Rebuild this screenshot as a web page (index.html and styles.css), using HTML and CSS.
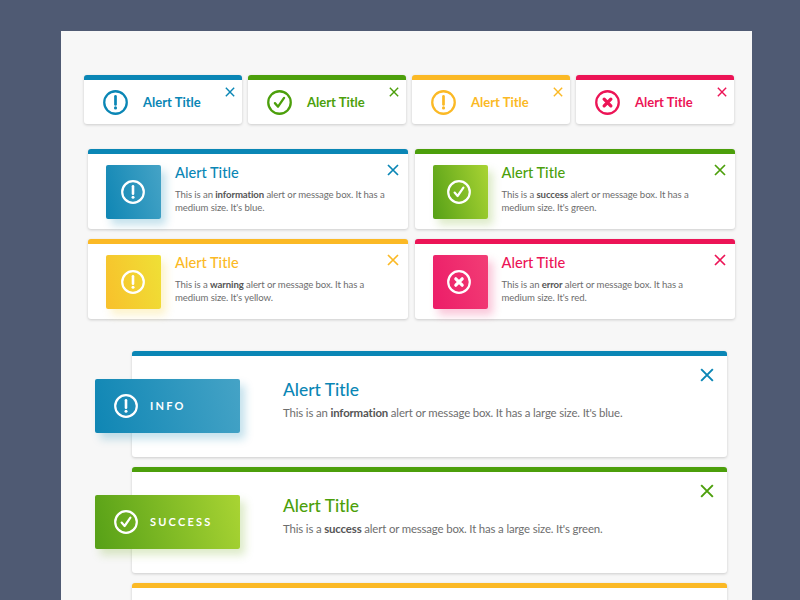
FILE: index.html
```html
<!DOCTYPE html>
<html lang="en">
<head>
    <meta charset="UTF-8">
    <meta name="viewport" content="width=device-width, initial-scale=1.0">
    <title>Alert Boxes</title>
    <link rel="stylesheet" href="styles.css">
</head>
<body>
    <svg class="defs" width="0" height="0">
        <symbol id="i-alert" viewBox="0 0 24 24">
            <circle cx="12" cy="12" r="10.8" fill="none" stroke="currentColor" stroke-width="2.2"/>
            <path d="M12 6.2v7.6" fill="none" stroke="currentColor" stroke-width="2.6" stroke-linecap="round"/>
            <circle cx="12" cy="17.2" r="1.5" fill="currentColor"/>
        </symbol>
        <symbol id="i-check" viewBox="0 0 24 24">
            <circle cx="12" cy="12" r="10.8" fill="none" stroke="currentColor" stroke-width="2.2"/>
            <path d="M7.6 12.6l3 3.4 5.8-8.4" fill="none" stroke="currentColor" stroke-width="2.2" stroke-linecap="round" stroke-linejoin="round"/>
        </symbol>
        <symbol id="i-error" viewBox="0 0 24 24">
            <circle cx="12" cy="12" r="10.8" fill="none" stroke="currentColor" stroke-width="2.2"/>
            <path d="M8.8 8.8l6.4 6.4M15.2 8.8l-6.4 6.4" fill="none" stroke="currentColor" stroke-width="3.2" stroke-linecap="round"/>
        </symbol>
        <symbol id="i-close" viewBox="0 0 12 12">
            <path d="M1 1l10 10M11 1L1 11" fill="none" stroke="currentColor" stroke-width="1.7"/>
        </symbol>
    </svg>

    <main class="sheet">
        <section class="row-sm">
            <div class="alert alert-sm info">
                <svg class="icon"><use href="#i-alert"/></svg>
                <h3>Alert Title</h3>
                <svg class="close"><use href="#i-close"/></svg>
            </div>
            <div class="alert alert-sm success">
                <svg class="icon"><use href="#i-check"/></svg>
                <h3>Alert Title</h3>
                <svg class="close"><use href="#i-close"/></svg>
            </div>
            <div class="alert alert-sm warning">
                <svg class="icon"><use href="#i-alert"/></svg>
                <h3>Alert Title</h3>
                <svg class="close"><use href="#i-close"/></svg>
            </div>
            <div class="alert alert-sm error">
                <svg class="icon"><use href="#i-error"/></svg>
                <h3>Alert Title</h3>
                <svg class="close"><use href="#i-close"/></svg>
            </div>
        </section>

        <section class="grid-md">
            <div class="alert alert-md info">
                <div class="tile"><svg class="icon"><use href="#i-alert"/></svg></div>
                <div class="copy">
                    <h3>Alert Title</h3>
                    <p>This is an <b>information</b> alert or message box. It has a<br>medium size. It's blue.</p>
                </div>
                <svg class="close"><use href="#i-close"/></svg>
            </div>
            <div class="alert alert-md success">
                <div class="tile"><svg class="icon"><use href="#i-check"/></svg></div>
                <div class="copy">
                    <h3>Alert Title</h3>
                    <p>This is a <b>success</b> alert or message box. It has a<br>medium size. It's green.</p>
                </div>
                <svg class="close"><use href="#i-close"/></svg>
            </div>
            <div class="alert alert-md warning">
                <div class="tile"><svg class="icon"><use href="#i-alert"/></svg></div>
                <div class="copy">
                    <h3>Alert Title</h3>
                    <p>This is a <b>warning</b> alert or message box. It has a<br>medium size. It's yellow.</p>
                </div>
                <svg class="close"><use href="#i-close"/></svg>
            </div>
            <div class="alert alert-md error">
                <div class="tile"><svg class="icon"><use href="#i-error"/></svg></div>
                <div class="copy">
                    <h3>Alert Title</h3>
                    <p>This is an <b>error</b> alert or message box. It has a<br>medium size. It's red.</p>
                </div>
                <svg class="close"><use href="#i-close"/></svg>
            </div>
        </section>

        <section class="stack-lg">
            <div class="alert alert-lg info">
                <div class="tile"><svg class="icon"><use href="#i-alert"/></svg><span>INFO</span></div>
                <div class="copy">
                    <h3>Alert Title</h3>
                    <p>This is an <b>information</b> alert or message box. It has a large size. It's blue.</p>
                </div>
                <svg class="close"><use href="#i-close"/></svg>
            </div>
            <div class="alert alert-lg success">
                <div class="tile"><svg class="icon"><use href="#i-check"/></svg><span>SUCCESS</span></div>
                <div class="copy">
                    <h3>Alert Title</h3>
                    <p>This is a <b>success</b> alert or message box. It has a large size. It's green.</p>
                </div>
                <svg class="close"><use href="#i-close"/></svg>
            </div>
            <div class="alert alert-lg warning"></div>
        </section>
    </main>
</body>
</html>
```

FILE: styles.css
```css
html, body {
    height: 100%;
    overflow: hidden;
}
body {
    margin: 0;
    background: #4f5a73;
    font-family: "Lato", "Noto Sans", sans-serif;
    color: #6e6e6e;
}
.defs {
    display: block;
}
.sheet {
    box-sizing: border-box;
    width: 691px;
    height: 569px;
    margin: 31px 0 0 61px;
    padding: 44px 17px 0 23px;
    background: #f7f7f7;
    overflow: hidden;
}
h3, p {
    margin: 0;
}

/* colours */
.info { --c: #0a86b5; --from: #0f86b4; --to: #45a3c6; --glow: #0f86b440; }
.success { --c: #4c9f0b; --from: #56a017; --to: #a9d433; --glow: #76b02340; }
.warning { --c: #fbb925; --from: #f8c02b; --to: #efe036; --glow: #f6cf2e40; }
.error { --c: #ec1456; --from: #ec1c68; --to: #f23d75; --glow: #ec1c6840; }

.alert {
    position: relative;
    box-sizing: border-box;
    display: flex;
    align-items: center;
    background: #fff;
    border-top: 5px solid var(--c);
    border-radius: 3px;
    box-shadow: 0 1px 3px #0000002e;
}
.alert h3 {
    color: var(--c);
}
.alert b {
    font-weight: 700;
    color: #555;
}
.close {
    position: absolute;
    color: var(--c);
}
.tile {
    display: flex;
    align-items: center;
    flex-shrink: 0;
    color: #fff;
    border-radius: 2px;
    background: linear-gradient(75deg, var(--from), var(--to));
    box-shadow: 5px 6px 9px var(--glow);
}
.icon {
    flex-shrink: 0;
}

/* small */
.row-sm {
    display: grid;
    grid-template-columns: repeat(4, 158px);
    gap: 6px;
}
.alert-sm {
    height: 49px;
    padding-left: 19px;
}
.alert-sm .icon {
    width: 25px;
    height: 25px;
    color: var(--c);
}
.alert-sm h3 {
    margin-left: 15px;
    font-size: 13px;
    font-weight: 700;
}
.alert-sm .close {
    top: 7px;
    right: 7px;
    width: 10px;
    height: 10px;
}

/* medium */
.grid-md {
    display: grid;
    grid-template-columns: 320px 320.5px;
    gap: 10px 6.5px;
    margin: 25px 0 0 4px;
}
.alert-md {
    height: 80px;
    padding-left: 18px;
}
.alert-md .tile {
    box-sizing: border-box;
    justify-content: center;
    width: 55px;
    height: 54px;
    margin-top: 1px;
    padding-right: 2px;
}
.alert-md .icon {
    width: 24px;
    height: 24px;
}
.alert-md .copy {
    align-self: flex-start;
    margin: 10px 0 0 14px;
    width: 222px;
}
.alert-md h3 {
    font-size: 14.6px;
    font-weight: 500;
    line-height: 18px;
}
.alert-md p {
    margin-top: 7px;
    font-size: 9.6px;
    letter-spacing: -0.1px;
    line-height: 12.5px;
}
.alert-md .close {
    top: 10px;
    right: 9.5px;
    width: 12px;
    height: 12px;
}

/* large */
.stack-lg {
    display: flex;
    flex-direction: column;
    gap: 10px;
    margin: 32px 0 0 48px;
    width: 595px;
}
.alert-lg {
    flex-shrink: 0;
    height: 106px;
    padding-right: 20px;
}
.alert-lg .tile {
    gap: 12px;
    width: 145px;
    height: 54px;
    margin: -2px 0 0 -37px;
    padding-left: 19px;
    box-sizing: border-box;
}
.alert-lg .tile span {
    font-size: 11px;
    font-weight: 700;
    letter-spacing: 2.2px;
}
.alert-lg .icon {
    width: 24px;
    height: 24px;
}
.alert-lg .copy {
    margin: -13px 0 0 43px;
}
.alert-lg h3 {
    font-size: 17.4px;
    font-weight: 500;
    line-height: 22px;
}
.alert-lg p {
    margin-top: 4px;
    font-size: 11.4px;
    letter-spacing: -0.15px;
    line-height: 16px;
}
.alert-lg .close {
    top: 12px;
    right: 13px;
    width: 14px;
    height: 14px;
}
```
